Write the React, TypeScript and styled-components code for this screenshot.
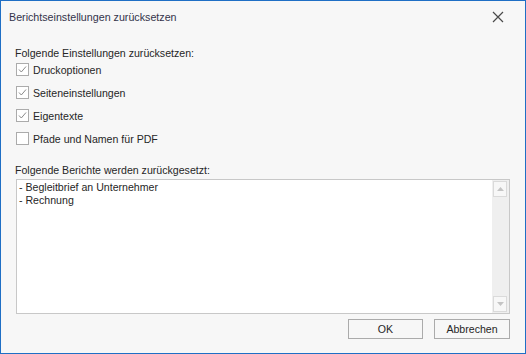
import React from "react";
import styled, { createGlobalStyle } from "styled-components";

const Global = createGlobalStyle`
  html, body { margin: 0; padding: 0; background: #f7f7f7; }
  * { box-sizing: border-box; }
`;

const Window = styled.div`
  width: 526px;
  height: 354px;
  border: 1px solid #1f6fc5;
  background: #f7f7f7;
  display: flex;
  flex-direction: column;
  font-family: "Liberation Sans", Arial, sans-serif;
  font-size: 10.6px;
  color: #262626;
`;

const TitleBar = styled.div`
  height: 31px;
  display: flex;
  align-items: center;
  justify-content: space-between;
  padding-left: 8px;
`;

const Title = styled.div`
  color: #33334a;
  font-size: 10.7px;
`;

const CloseButton = styled.div`
  width: 30px;
  height: 30px;
  margin-right: 12px;
  display: flex;
  align-items: center;
  justify-content: center;
`;

const Body = styled.div`
  flex: 1;
  display: flex;
  flex-direction: column;
  padding: 0 15px;
`;

const GroupLabel = styled.div<{ $top: number }>`
  height: 12px;
  line-height: 12px;
  margin-top: ${(p) => p.$top}px;
  margin-left: -1px;
`;

const CheckList = styled.div`
  margin-top: -1px;
  display: flex;
  flex-direction: column;
`;

const CheckRow = styled.div`
  height: 23px;
  display: flex;
  align-items: center;
`;

const Box = styled.div`
  width: 13px;
  height: 13px;
  border: 1px solid #ababab;
  background: #ffffff;
  margin-right: 4px;
  display: flex;
  align-items: center;
  justify-content: center;
`;

const ListBox = styled.div`
  margin-top: 3px;
  height: 135px;
  border: 1px solid #c8c8c8;
  background: #ffffff;
  display: flex;
`;

const ListContent = styled.div`
  flex: 1;
  padding: 1px 2px;
  line-height: 13px;
`;

const ScrollBar = styled.div`
  width: 17px;
  background: #efefef;
  display: flex;
  flex-direction: column;
  justify-content: space-between;
  padding: 1px 2px 1px 1px;
`;

const ArrowButton = styled.div`
  height: 16px;
  border: 1px solid #dadada;
  background: #f7f7f7;
  display: flex;
  align-items: center;
  justify-content: center;
`;

const ButtonRow = styled.div`
  margin-top: 5px;
  display: flex;
  justify-content: flex-end;
  gap: 11px;
`;

const Button = styled.div<{ $w: number }>`
  width: ${(p) => p.$w}px;
  height: 20px;
  border: 1px solid #ababab;
  background: #f7f7f7;
  display: flex;
  align-items: center;
  justify-content: center;
`;

const Check = ({ on }: { on: boolean }) => (
  <Box>
    {on && (
      <svg width="11" height="11" viewBox="0 0 11 11">
        <path d="M2 5.5 L4.3 8 L9 2.5" fill="none" stroke="#8a8a8a" strokeWidth="1" />
      </svg>
    )}
  </Box>
);

const items: [string, boolean][] = [
  ["Druckoptionen", true],
  ["Seiteneinstellungen", true],
  ["Eigentexte", true],
  ["Pfade und Namen für PDF", false],
];

export default function App() {
  return (
    <>
      <Global />
      <Window>
        <TitleBar>
          <Title>Berichtseinstellungen zurücksetzen</Title>
          <CloseButton>
            <svg width="12" height="12" viewBox="0 0 12 12">
              <path d="M1 1 L11 11 M11 1 L1 11" stroke="#4a4a4a" strokeWidth="1.2" />
            </svg>
          </CloseButton>
        </TitleBar>
        <Body>
          <GroupLabel $top={15}>Folgende Einstellungen zurücksetzen:</GroupLabel>
          <CheckList>
            {items.map(([t, on]) => (
              <CheckRow key={t}>
                <Check on={on} />
                {t}
              </CheckRow>
            ))}
          </CheckList>
          <GroupLabel $top={14}>Folgende Berichte werden zurückgesetzt:</GroupLabel>
          <ListBox>
            <ListContent>
              <div>- Begleitbrief an Unternehmer</div>
              <div>- Rechnung</div>
            </ListContent>
            <ScrollBar>
              <ArrowButton>
                <svg width="7" height="4" viewBox="0 0 7 4">
                  <path d="M0 4 L3.5 0 L7 4 Z" fill="#c4c4c4" />
                </svg>
              </ArrowButton>
              <ArrowButton>
                <svg width="7" height="4" viewBox="0 0 7 4">
                  <path d="M0 0 L3.5 4 L7 0 Z" fill="#c4c4c4" />
                </svg>
              </ArrowButton>
            </ScrollBar>
          </ListBox>
          <ButtonRow>
            <Button $w={75}>OK</Button>
            <Button $w={76}>Abbrechen</Button>
          </ButtonRow>
        </Body>
      </Window>
    </>
  );
}
